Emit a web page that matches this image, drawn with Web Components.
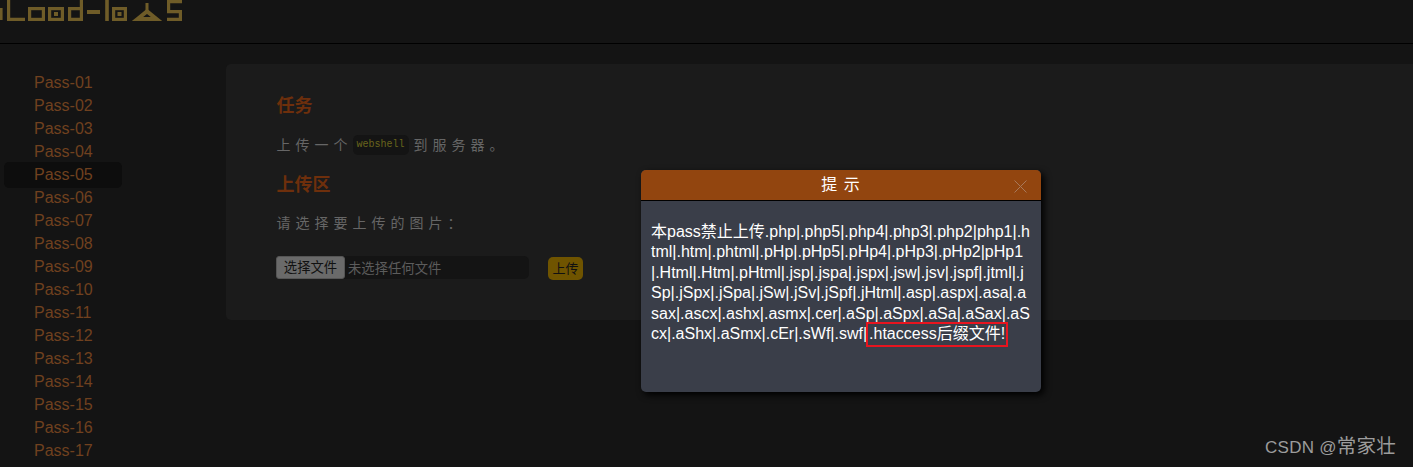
<!DOCTYPE html>
<html lang="zh">
<head>
<meta charset="utf-8">
<title>upload-labs</title>
<style>
  html, body { margin: 0; height: 100%; background: #141414; overflow: hidden; }
  body { font-family: "Liberation Sans", "Noto Sans CJK SC", sans-serif; }
</style>
</head>
<body>
<lab-page>
  <lab-header slot="header"></lab-header>
  <lab-sidebar slot="sidebar"></lab-sidebar>
  <lab-panel slot="main"></lab-panel>
</lab-page>
<lab-dialog title="提 示">本pass禁止上传.php|.php5|.php4|.php3|.php2|php1|.html|.htm|.phtml|.pHp|.pHp5|.pHp4|.pHp3|.pHp2|pHp1|.Html|.Htm|.pHtml|.jsp|.jspa|.jspx|.jsw|.jsv|.jspf|.jtml|.jSp|.jSpx|.jSpa|.jSw|.jSv|.jSpf|.jHtml|.asp|.aspx|.asa|.asax|.ascx|.ashx|.asmx|.cer|.aSp|.aSpx|.aSa|.aSax|.aScx|.aShx|.aSmx|.cEr|.sWf|.swf|<mark>.htaccess后缀文件!</mark></lab-dialog>
<csdn-mark>CSDN @<span style="font-size:19.5px">常家壮</span></csdn-mark>

<script>
class LabPage extends HTMLElement {
  constructor() {
    super();
    this.attachShadow({ mode: 'open' });
    this.shadowRoot.innerHTML = `
      <style>
        :host { display: grid; grid-template-columns: 226px 1fr; grid-template-rows: 44px 1fr; height: 467px; overflow: hidden; }
        .head { grid-column: 1 / 3; }
      </style>
      <div class="head"><slot name="header"></slot></div>
      <slot name="sidebar"></slot>
      <slot name="main"></slot>
    `;
  }
}

class LabHeader extends HTMLElement {
  constructor() {
    super();
    this.attachShadow({ mode: 'open' });
    this.shadowRoot.innerHTML = `
      <style>
        :host { display: block; height: 44px; box-sizing: border-box; border-bottom: 1px solid #000; overflow: hidden; }
        svg { display: block; }
      </style>
      <svg width="190" height="24" viewBox="0 0 190 24" fill="none" stroke="#6f5c28" stroke-width="3.2">
        <path d="M1 8v12"/>
        <path d="M8.600 0v19.400h16.400"/>
        <rect x="29.600" y="8.600" width="13.800" height="10.800"/>
        <rect x="49.600" y="8.600" width="12.800" height="10.800"/>
        <rect x="54" y="12" width="4" height="4" fill="#6f5c28" stroke="none"/>
        <path d="M69.600 8.600h11.800v10.800h-11.800z M81.400 0v19.400"/>
        <path d="M87 12h13" stroke-width="4"/>
        <path d="M107 0v21" stroke-width="3.600"/>
        <rect x="113.600" y="8.600" width="11.800" height="10.800"/>
        <rect x="117.500" y="12" width="4" height="4" fill="#6f5c28" stroke="none"/>
        <path d="M147 3v8" stroke-width="3"/>
        <path d="M137.500 19l9.500-7.600 9.500 7.600z" stroke-width="4"/>
        <path d="M182 1.600h-13.400v10h11.800v7.800h-13.400"/>
      </svg>
    `;
  }
}

class LabSidebar extends HTMLElement {
  constructor() {
    super();
    this.attachShadow({ mode: 'open' });
    let items = '';
    for (let i = 1; i <= 17; i++) {
      const n = String(i).padStart(2, '0');
      items += `<a class="${i === 5 ? 'active' : ''}">Pass-${n}</a>`;
    }
    this.shadowRoot.innerHTML = `
      <style>
        :host { display: block; padding: 27px 104px 0 4px; overflow: hidden; }
        a { display: block; height: 23px; line-height: 23px; padding-left: 30px; font-size: 16px; color: #70411f; border-radius: 5px; }
        a.active { background: #0d0d0d; height: 26px; line-height: 26px; margin: -1.500px 0; }
      </style>
      ${items}
    `;
  }
}

class LabPanel extends HTMLElement {
  constructor() {
    super();
    this.attachShadow({ mode: 'open' });
    this.shadowRoot.innerHTML = `
      <style>
        :host { display: block; padding-top: 20px; }
        .card { background: #1b1b1b; height: 256px; box-sizing: border-box; border-radius: 5px 0 0 5px; padding: 30px 0 0 50.500px; color: #666; font-size: 14px; letter-spacing: 5px; }
        h2 { margin: 0; font-size: 18px; line-height: 24px; color: #6e2f0c; letter-spacing: 0; font-weight: 700; }
        p { margin: 0; }
        .task { margin-top: 15px; height: 24px; line-height: 24px; display: flex; align-items: center; }
        code { font-family: "Liberation Mono", monospace; font-size: 10px; letter-spacing: 0; color: #6a651c; background: #141414; border-radius: 5px; padding: 0 4px; height: 20px; line-height: 20px; margin-right: 5px; }
        .up { margin-top: 16px; }
        .ask { margin-top: 14px; line-height: 24px; height: 24px; }
        .row { margin: 21px 0 0 -0.500px; display: flex; align-items: flex-start; letter-spacing: 0; }
        .file { width: 253px; height: 23px; background: #141414; border-radius: 5px; display: flex; align-items: center; font-size: 13.330px; color: #5c5c5c; }
        .pick { width: 69px; height: 23px; box-sizing: border-box; background: #6a6a6a; border: 1px solid #555; border-radius: 3px; color: #111; text-align: center; line-height: 21px; margin-right: 3px; }
        .go { margin: 1px 0 0 19px; width: 35px; height: 23px; background: #6f5400; border-radius: 5px; color: #111; font-size: 13px; text-align: center; line-height: 23px; }
      </style>
      <div class="card">
        <h2>任务</h2>
        <p class="task">上传一个<code>webshell</code>到服务器。</p>
        <h2 class="up">上传区</h2>
        <p class="ask">请选择要上传的图片：</p>
        <div class="row">
          <div class="file"><span class="pick">选择文件</span>未选择任何文件</div>
          <div class="go">上传</div>
        </div>
      </div>
    `;
  }
}

class LabDialog extends HTMLElement {
  constructor() {
    super();
    this.attachShadow({ mode: 'open' });
    this.shadowRoot.innerHTML = `
      <style>
        :host { position: absolute; left: 641px; top: 170px; width: 400px; height: 222px; display: flex; flex-direction: column; border-radius: 5px; background: #3a3e49; box-shadow: 3px 3px 7px #000; color: #fff; }
        header { height: 30px; flex: none; background: #92450f; border-bottom: 1px solid #000; border-radius: 5px 5px 0 0; position: relative; text-align: center; line-height: 30px; font-size: 16px; letter-spacing: 1px; }
        svg { position: absolute; right: 14px; top: 10px; }
        .body { padding: 21px 10px 0; font-size: 16px; line-height: 20.400px; word-break: break-all; }
        ::slotted(mark) { background: none; color: inherit; margin-left: 2px; padding-bottom: 2px; outline: 2px solid #e8141f; outline-offset: 1px; }
      </style>
      <header><span id="t"></span>
        <svg width="13" height="13" viewBox="0 0 13 13" stroke="#a8795a" stroke-width="1" fill="none"><path d="M0.500 0.500l12 12M12.500 0.500l-12 12"/></svg>
      </header>
      <div class="body"><slot></slot></div>
    `;
    this.shadowRoot.getElementById('t').textContent = this.getAttribute('title');
  }
}

class CsdnMark extends HTMLElement {
  constructor() {
    super();
    this.attachShadow({ mode: 'open' });
    this.shadowRoot.innerHTML = `
      <style>
        :host { position: absolute; right: 17px; top: 435px; font-size: 17px; letter-spacing: .25px; line-height: 22px; color: #9c9c9c; white-space: nowrap; }
      </style>
      <slot></slot>
    `;
  }
}

customElements.define('lab-page', LabPage);
customElements.define('lab-header', LabHeader);
customElements.define('lab-sidebar', LabSidebar);
customElements.define('lab-panel', LabPanel);
customElements.define('lab-dialog', LabDialog);
customElements.define('csdn-mark', CsdnMark);
</script>
</body>
</html>
